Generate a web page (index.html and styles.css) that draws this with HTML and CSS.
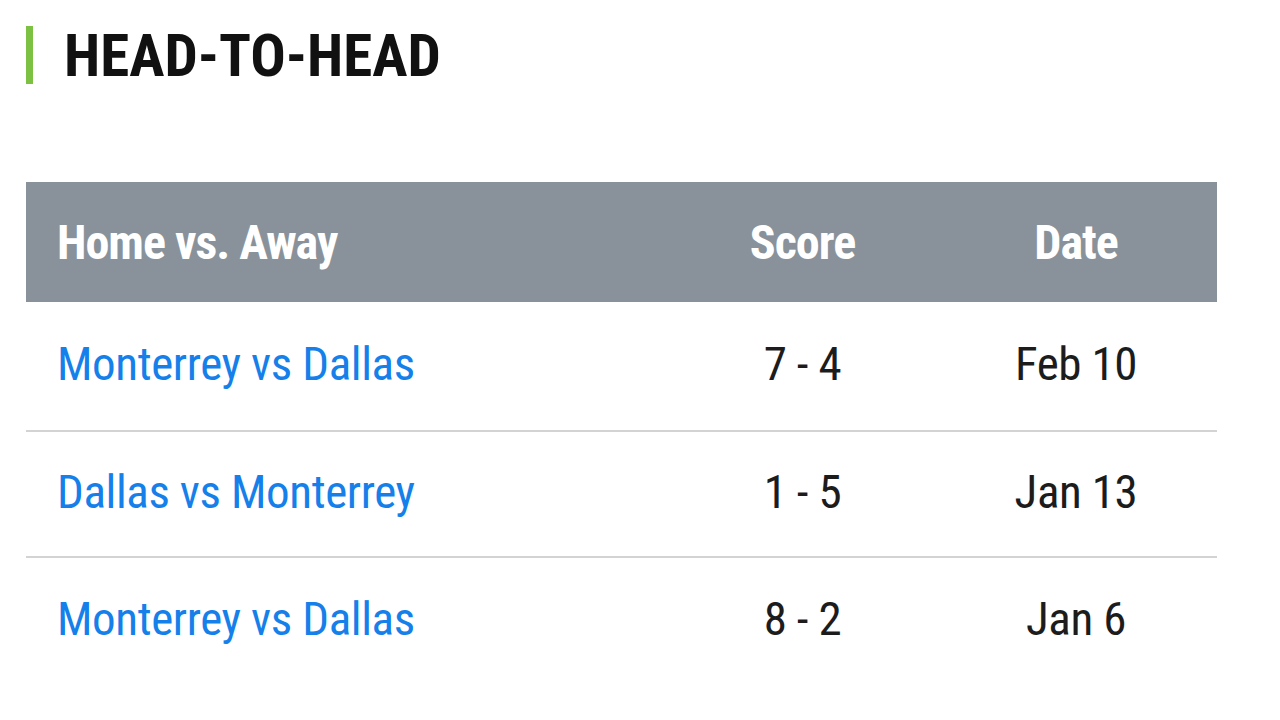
FILE: index.html
```html
<!DOCTYPE html>
<html lang="en">
<head>
<meta charset="utf-8">
<title>Head-to-Head</title>
<link rel="stylesheet" href="styles.css">
</head>
<body>
<section class="widget">
  <h2 class="title"><span class="title-text">HEAD-TO-HEAD</span></h2>
  <div class="table">
    <div class="row head">
      <div class="cell match">Home vs. Away</div>
      <div class="cell score">Score</div>
      <div class="cell date">Date</div>
    </div>
    <div class="row first">
      <div class="cell match"><a href="#">Monterrey vs Dallas</a></div>
      <div class="cell score">7 - 4</div>
      <div class="cell date">Feb 10</div>
    </div>
    <div class="row">
      <div class="cell match"><a href="#">Dallas vs Monterrey</a></div>
      <div class="cell score">1 - 5</div>
      <div class="cell date">Jan 13</div>
    </div>
    <div class="row last">
      <div class="cell match"><a href="#">Monterrey vs Dallas</a></div>
      <div class="cell score">8 - 2</div>
      <div class="cell date">Jan 6</div>
    </div>
  </div>
</section>
</body>
</html>
```

FILE: styles.css
```css
html, body {
  margin: 0;
  padding: 0;
  background: #ffffff;
}

body {
  font-family: "Roboto Condensed", "Roboto", "Liberation Sans", sans-serif;
  color: #1c1c1c;
}

.widget {
  width: 1191px;
  padding: 26px 0 0 26px;
}

.title {
  margin: 0;
  height: 58px;
  display: flex;
  align-items: center;
  border-left: 7px solid #7cc142;
  padding-left: 31px;
  font-size: 59px;
  font-weight: 700;
  line-height: 1;
  color: #111111;
}

.title-text {
  display: inline-block;
}

.table {
  margin-top: 98px;
}

.row {
  display: grid;
  grid-template-columns: 1fr 265px 282px;
  align-items: center;
  height: 126px;
  padding-bottom: 5px;
  border-bottom: 2px solid #d3d3d3;
  box-sizing: border-box;
  font-size: 47px;
  letter-spacing: -0.4px;
}

.row.first {
  height: 130px;
}

.row.last {
  border-bottom: none;
}

.row.head {
  height: 120px;
  padding-bottom: 0;
  background: #89929a;
  border-bottom: none;
  color: #ffffff;
  font-weight: 700;
  font-size: 48px;
  letter-spacing: -1px;
}

.cell.match {
  padding-left: 31px;
}

.cell.score,
.cell.date {
  text-align: center;
}

.cell a {
  color: #1580ea;
  text-decoration: none;
}
```
